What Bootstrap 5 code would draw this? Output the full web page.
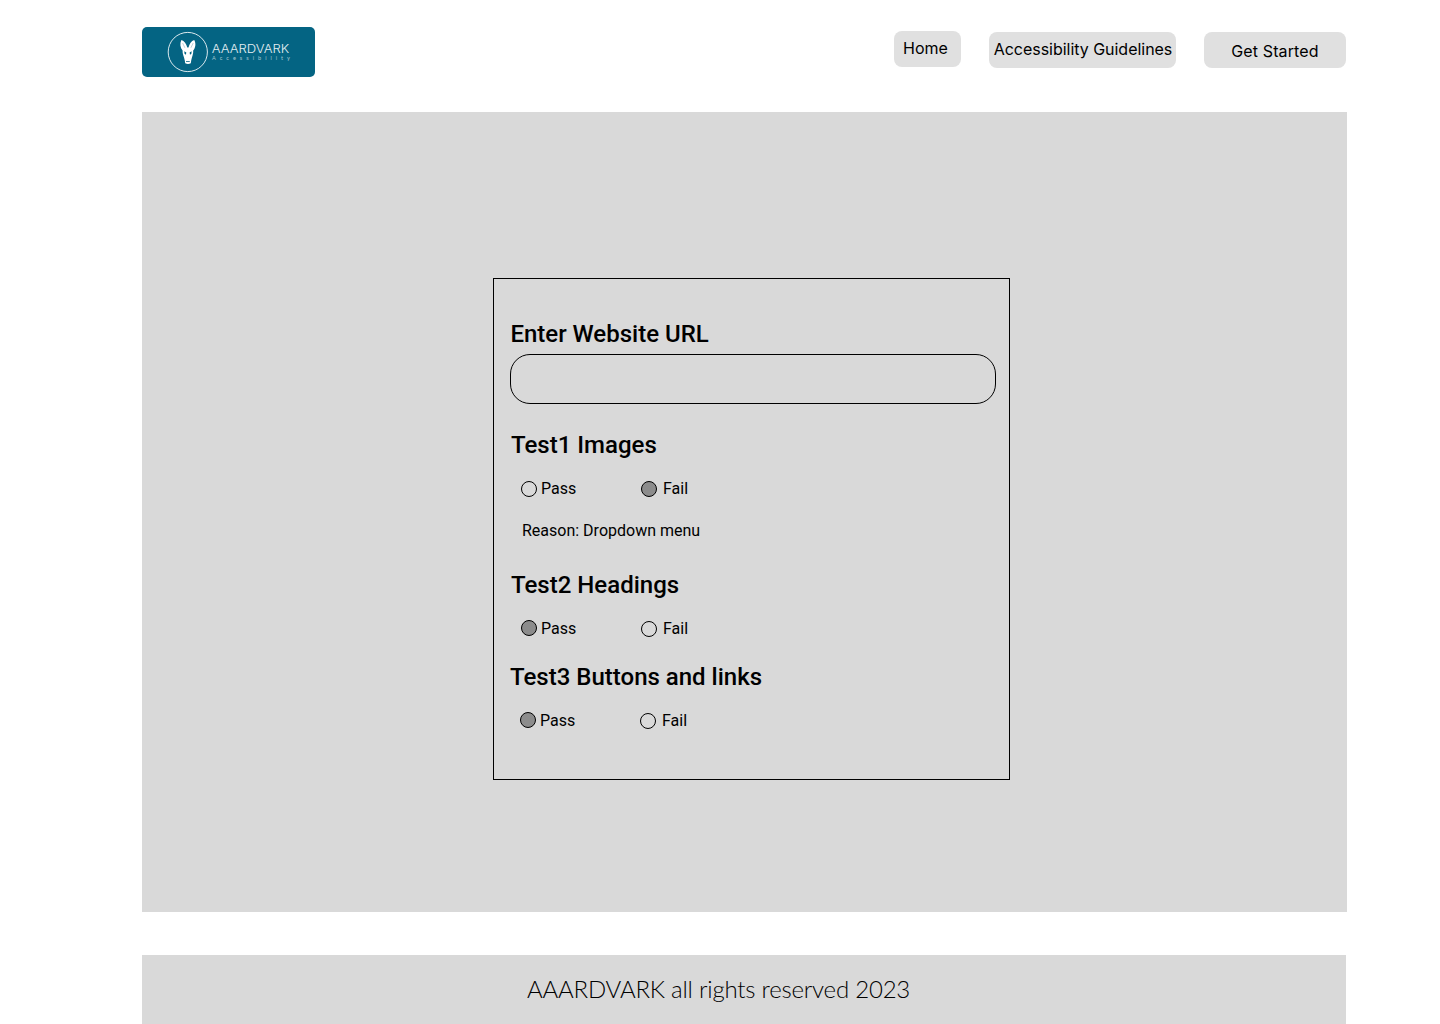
<!DOCTYPE html>
<html lang="en">
<head>
<meta charset="utf-8">
<meta name="viewport" content="width=device-width, initial-scale=1">
<title>AAARDVARK Accessibility</title>
<link href="https://cdn.jsdelivr.net/npm/bootstrap@5.3.0/dist/css/bootstrap.min.css" rel="stylesheet">
<style>
body{background:#fff;color:#000;font-family:Roboto,"Liberation Sans",sans-serif;overflow:hidden}
.page{width:1205px;margin-left:142px;height:1024px}
.topbar{height:112px;padding:27px 1px 0 0}
.brand{width:173px;height:50px;border-radius:5px;background:#046483}
.links{gap:28px;padding-top:5px}
.link-btn{height:36px;padding:0;border:0;border-radius:8px;background:#e0e0e0;color:#000;font:400 16px/32px Inter,sans-serif;white-space:nowrap;text-align:center}
.link-btn:hover{background:#d4d4d4}
.btn-home{width:67px;margin-top:-1px;padding-right:4px;padding-bottom:2px}
.btn-guide{width:187px;padding:0 0 2px 1px;letter-spacing:-.03px}
.btn-start{width:142px;line-height:38px;letter-spacing:.12px}
.stage{height:800px;background:#d9d9d9;padding:166px 0 0 351px}
.report{width:517px;height:502px;border:1px solid #000;padding:41px 13px 0 16px}
.report h2,.report .url-label{font-size:24px;font-weight:500;line-height:28px;margin:0;padding-left:1px;display:block}
.report .url-label{padding-left:.4px}
.url-box{width:486px;height:50px;border:1px solid #000;border-radius:20px;background:transparent;margin:6px 0 27px}
.url-box:focus{background:transparent;box-shadow:none;border-color:#000}
.choices{height:18px;margin:21px 0 0 11px}
.choice{font-size:16px;line-height:18px;width:120px}
.choice .form-check-input{width:16px;height:16px;margin:1px 4px 0 0;border:1px solid #000;background:transparent;flex:none}
.choice.fail .form-check-input{margin-right:6px}
.choice .form-check-input:checked{background:#8c8c8c}
.raised .form-check-input:checked{margin-top:0}
.reason{font-size:16px;line-height:18px;margin:24px 0 31px 12px}
.third{margin:25px 0 0 -1px}
.foot{width:1204px;height:69px;margin-top:43px;background:#d9d9d9;font:300 24px/29px Lato,sans-serif;letter-spacing:-.21px;padding:19px 0 0 385px}
</style>
<script src="https://cdn.jsdelivr.net/npm/bootstrap@5.3.0/dist/js/bootstrap.bundle.min.js"></script>
</head>
<body>
<div class="page">
  <header class="topbar d-flex justify-content-between align-items-start">
    <a class="brand d-block" href="#" aria-label="AAARDVARK Accessibility">
      <svg class="d-block" width="173" height="50" viewBox="0 0 173 50">
        <circle cx="45.800" cy="25" r="19.600" fill="none" stroke="#dbe9ee" stroke-width="1"/>
        <path d="M39.400 13C42.300 13.800 44.400 16.800 45.300 20.500h1.200C47.400 16.800 49.300 13.800 52.200 13C54.200 16.500 53.600 20.500 51.200 23.600C51.600 26.500 49.900 30 49.200 33.500L48.800 36.200Q46 37.800 43.200 36.200L42.800 33.500C42.100 30 40.200 26.500 40.600 23.600C38.200 20.500 37.600 16.500 39.400 13Z" fill="#fff"/>
        <path d="M42.300 24.200l2 1.300-.4 2.200-1.400-1zM49.600 24.200l-2 1.300.4 2.200 1.400-1z" fill="#046483"/>
        <path d="M40.600 16l2.300 4.800M51.200 16l-2.300 4.800" stroke="#8fb6c3" stroke-width=".6"/>
        <path d="M44 34.500h3.800" stroke="#046483" stroke-width=".8"/>
        <text x="69.700" y="26" font-family="Inter,sans-serif" font-weight="300" font-size="12.200" fill="#e3eef2" textLength="77.500" lengthAdjust="spacingAndGlyphs">AAARDVARK</text>
        <text x="70" y="32.600" font-family="Lato,sans-serif" font-size="5.600" fill="#a5c6d1" textLength="78" lengthAdjust="spacing">Accessibility</text>
      </svg>
    </a>
    <nav class="links d-flex">
      <button type="button" class="btn link-btn btn-home">Home</button>
      <button type="button" class="btn link-btn btn-guide">Accessibility Guidelines</button>
      <button type="button" class="btn link-btn btn-start">Get Started</button>
    </nav>
  </header>

  <main class="stage">
    <form class="report">
      <label class="url-label" for="url">Enter Website URL</label>
      <input id="url" type="url" class="form-control url-box">

      <h2>Test1 Images</h2>
      <div class="choices d-flex">
        <label class="choice d-flex"><input class="form-check-input" type="radio" name="t1">Pass</label>
        <label class="choice fail d-flex"><input class="form-check-input" type="radio" name="t1" checked>Fail</label>
      </div>
      <p class="reason">Reason: Dropdown menu</p>

      <h2>Test2 Headings</h2>
      <div class="choices raised d-flex">
        <label class="choice d-flex"><input class="form-check-input" type="radio" name="t2" checked>Pass</label>
        <label class="choice fail d-flex"><input class="form-check-input" type="radio" name="t2">Fail</label>
      </div>

      <section class="third">
        <h2>Test3 Buttons and links</h2>
        <div class="choices raised d-flex">
          <label class="choice d-flex"><input class="form-check-input" type="radio" name="t3" checked>Pass</label>
          <label class="choice fail d-flex"><input class="form-check-input" type="radio" name="t3">Fail</label>
        </div>
      </section>
    </form>
  </main>

  <footer class="foot">AAARDVARK all rights reserved 2023</footer>
</div>
</body>
</html>
